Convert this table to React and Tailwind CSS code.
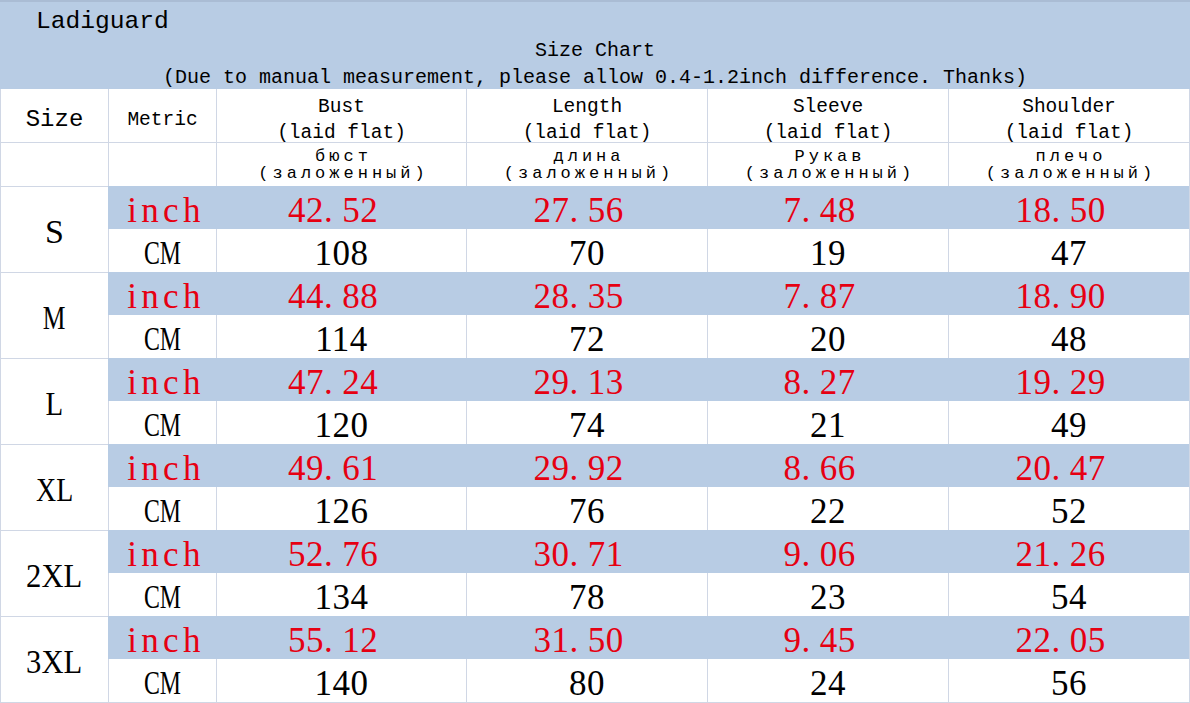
import React from "react";

const rows = [
  { size: "S", sc: "scale-x-100", inch: ["42.52", "27.56", "7.48", "18.50"], cm: ["108", "70", "19", "47"] },
  { size: "M", sc: "scale-x-75", inch: ["44.88", "28.35", "7.87", "18.90"], cm: ["114", "72", "20", "48"] },
  { size: "L", sc: "scale-x-[0.85]", inch: ["47.24", "29.13", "8.27", "19.29"], cm: ["120", "74", "21", "49"] },
  { size: "XL", sc: "scale-x-[0.82]", inch: ["49.61", "29.92", "8.66", "20.47"], cm: ["126", "76", "22", "52"] },
  { size: "2XL", sc: "scale-x-90", inch: ["52.76", "30.71", "9.06", "21.26"], cm: ["134", "78", "23", "54"] },
  { size: "3XL", sc: "scale-x-90", inch: ["55.12", "31.50", "9.45", "22.05"], cm: ["140", "80", "24", "56"] },
];

const heads = [
  ["Bust", "бюст"],
  ["Length", "длина"],
  ["Sleeve", "Рукав"],
  ["Shoulder", "плечо"],
];

const mono = "font-['Liberation_Mono',monospace]";
const serif = "font-['Liberation_Serif',serif]";
const line = "border-[#d0d7e5]";

function Num({ v }) {
  const [a, b] = v.split(".");
  return (
    <span className="pr-4 whitespace-nowrap">
      {a}
      <span className="mr-[9px]">.</span>
      {b}
    </span>
  );
}

export default function App() {
  return (
    <div className="w-[1190px] h-[703px] bg-white overflow-hidden text-black">
      <div className={`h-[89px] bg-[#b8cce4] border-t-2 border-[#aabcd4] flex flex-col ${mono}`}>
        <div className="pl-[36px] pt-[6px] text-[24.6px] leading-[28px]">Ladiguard</div>
        <div className="mt-[3px] text-center text-[20px] leading-[24px]">Size Chart</div>
        <div className="mt-[3px] text-center text-[20px] leading-[24px] whitespace-nowrap">
          (Due to manual measurement, please allow 0.4-1.2inch difference. Thanks)
        </div>
      </div>

      <div className={`grid grid-cols-[108px_108px_250px_241px_241px_241px] w-[1190px] border-r border-b ${line}`}>
        {/* header row 1 */}
        <div className={`h-[53px] border-l ${line} flex items-center justify-center pt-[9px] ${mono} text-[24px] leading-[28px]`}>
          Size
        </div>
        <div className={`h-[53px] border-l ${line} flex items-center justify-center pt-[9px] ${mono} text-[19.5px] leading-[24px]`}>
          Metric
        </div>
        {heads.map(([en]) => (
          <div
            key={en}
            className={`h-[53px] border-l ${line} flex flex-col items-center pt-[5px] ${mono} text-[19.5px] leading-[26px] whitespace-nowrap`}
          >
            <span>{en}</span>
            <span>(laid flat)</span>
          </div>
        ))}

        {/* header row 2 (Russian) */}
        <div className={`h-[44px] border-l border-t ${line}`} />
        <div className={`h-[44px] border-l border-t ${line}`} />
        {heads.map(([en, ru]) => (
          <div
            key={ru}
            className={`h-[44px] border-l border-t ${line} flex flex-col items-center justify-center pt-[0px] pl-[4px] ${mono} text-[17px] leading-[17px] tracking-[4px] whitespace-nowrap`}
          >
            <span>{ru}</span>
            <span>(заложенный)</span>
          </div>
        ))}

        {/* data rows */}
        {rows.map((r) => (
          <React.Fragment key={r.size}>
            <div
              className={`row-span-2 h-[86px] border-l border-t ${line} flex items-center justify-center pt-[5px] ${serif} text-[34px] leading-none`}
            >
              <span className={`inline-block ${r.sc}`}>{r.size}</span>
            </div>
            <div className={`col-span-5 h-[43px] bg-[#b8cce4] grid grid-cols-[108px_250px_241px_241px_241px] text-[#e60012] ${serif} text-[35px] leading-none`}>
              <div className="flex items-center justify-center pt-[5px] tracking-[4.3px] pl-[8px]">inch</div>
              {r.inch.map((v, i) => (
                <div key={i} className="flex items-center justify-center pt-[5px] tracking-[0.5px]">
                  <Num v={v} />
                </div>
              ))}
            </div>
            <div className={`h-[43px] border-l ${line} flex items-center justify-center pt-[5px] ${serif} text-[34px] leading-none`}>
              <span className="inline-block scale-x-[0.7]">CM</span>
            </div>
            {r.cm.map((v, i) => (
              <div
                key={i}
                className={`h-[43px] border-l ${line} flex items-center justify-center pt-[5px] ${serif} text-[35px] leading-none tracking-[0.5px]`}
              >
                {v}
              </div>
            ))}
          </React.Fragment>
        ))}
      </div>
    </div>
  );
}
